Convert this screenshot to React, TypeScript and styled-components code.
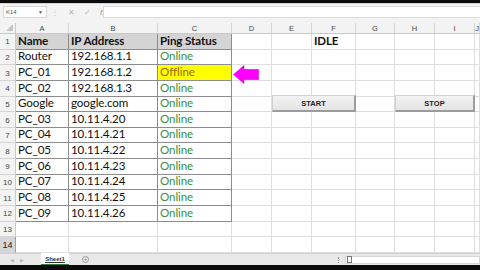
import React from 'react';
import styled, { createGlobalStyle } from 'styled-components';

const GlobalStyle = createGlobalStyle`
  html, body { margin: 0; padding: 0; background: #000; overflow: hidden; }
  * { box-sizing: border-box; }
`;

const cols = ['A', 'B', 'C', 'D', 'E', 'F', 'G', 'H', 'I', 'J'];
const rows = [
  { name: 'Router', ip: '192.168.1.1', status: 'Online' },
  { name: 'PC_01', ip: '192.168.1.2', status: 'Offline' },
  { name: 'PC_02', ip: '192.168.1.3', status: 'Online' },
  { name: 'Google', ip: 'google.com', status: 'Online' },
  { name: 'PC_03', ip: '10.11.4.20', status: 'Online' },
  { name: 'PC_04', ip: '10.11.4.21', status: 'Online' },
  { name: 'PC_05', ip: '10.11.4.22', status: 'Online' },
  { name: 'PC_06', ip: '10.11.4.23', status: 'Online' },
  { name: 'PC_07', ip: '10.11.4.24', status: 'Online' },
  { name: 'PC_08', ip: '10.11.4.25', status: 'Online' },
  { name: 'PC_09', ip: '10.11.4.26', status: 'Online' },
];

const Window = styled.div`
  width: 480px;
  height: 270px;
  display: flex;
  flex-direction: column;
  background: #fff;
  font-family: Lato, 'Liberation Sans', Arial, sans-serif;
`;

const BlackBar = styled.div<{ h: number }>`
  height: ${p => p.h}px;
  background: #0b0b0b;
  flex: none;
`;

const FormulaBar = styled.div`
  height: 20px;
  flex: none;
  background: #f3f3f3;
  border-top: 1px solid #cfd8cf;
  display: flex;
  align-items: flex-start;
  padding: 2px 0 0 3px;
`;

const NameBox = styled.div`
  width: 44px;
  height: 12px;
  background: #fff;
  border: 1px solid #d8d8d8;
  display: flex;
  align-items: center;
  justify-content: space-between;
  padding: 0 3px 0 2px;
  font-size: 6px;
  color: #555;
  font-family: 'Liberation Sans', Arial, sans-serif;
`;

const FxIcons = styled.div`
  width: 56px;
  height: 12px;
  display: flex;
  align-items: center;
  padding-left: 4px;
  gap: 9px;
  font-size: 8px;
  color: #b5b5b5;
  font-family: 'Liberation Sans', Arial, sans-serif;
`;

const FormulaInput = styled.div`
  flex: 1;
  height: 12px;
  background: #fff;
  border: 1px solid #dcdcdc;
  border-right: none;
`;

const SheetArea = styled.div`
  position: relative;
  flex: 1;
  background: #fff;
  overflow: hidden;
`;

const Grid = styled.div`
  display: grid;
  grid-template-columns: 16px 53px 89px 74px 40px 40px 44px 39px 40px 40px 1fr;
  grid-template-rows: 11px repeat(14, 15.65px);
  height: 100%;
`;

const Corner = styled.div`
  background: #f3f3f3;
  border-right: 1px solid #c9c9c9;
  border-bottom: 1px solid #c9c9c9;
  position: relative;
  &::after {
    content: '';
    position: absolute;
    right: 2px;
    bottom: 2px;
    border-left: 7px solid transparent;
    border-bottom: 7px solid #c6c6c6;
  }
`;

const ColHead = styled.div`
  background: #f3f3f3;
  border-right: 1px solid #d4d4d4;
  border-bottom: 1px solid #c9c9c9;
  font-family: 'Liberation Sans', Arial, sans-serif;
  font-size: 7.5px;
  color: #444;
  display: flex;
  align-items: center;
  justify-content: center;
`;

const RowHead = styled.div<{ $active?: boolean }>`
  background: ${p => (p.$active ? '#d6d6d6' : '#f3f3f3')};
  border-right: 1px solid ${p => (p.$active ? '#a0a0a0' : '#c9c9c9')};
  border-bottom: 1px solid #d4d4d4;
  font-family: 'Liberation Sans', Arial, sans-serif;
  font-size: ${p => (p.$active ? '9px' : '8px')};
  color: ${p => (p.$active ? '#222' : '#444')};
  display: flex;
  align-items: center;
  justify-content: center;
  padding-top: 1px;
`;

type Tone = 'plain' | 'head' | 'online' | 'offline';

const toneColor: Record<Tone, string> = {
  plain: '#111',
  head: '#111',
  online: '#3a8f3a',
  offline: '#9c6500',
};

const Cell = styled.div<{ $tone?: Tone; $boxed?: boolean; $bold?: boolean }>`
  border-right: 1px solid ${p => (p.$boxed ? '#8c8c8c' : '#dedede')};
  border-bottom: 1px solid ${p => (p.$boxed ? '#8c8c8c' : '#dedede')};
  background: ${p =>
    p.$tone === 'head' ? '#d4d4d4' : p.$tone === 'offline' ? '#ffff00' : '#fff'};
  color: ${p => toneColor[p.$tone || 'plain']};
  font-size: 11.6px;
  letter-spacing: -0.1px;
  font-weight: ${p => (p.$bold || p.$tone === 'head' ? 700 : 400)};
  display: flex;
  align-items: flex-end;
  padding: 0 0 1px 2px;
  white-space: nowrap;
  line-height: 14px;
`;

const Button = styled.div<{ $left: number; $width: number }>`
  position: absolute;
  top: 72px;
  left: ${p => p.$left}px;
  width: ${p => p.$width}px;
  height: 17px;
  background: linear-gradient(#f2f2f2, #e4e4e4);
  border: 1px solid #d0d0d0;
  border-right: 2px solid #9c9c9c;
  border-bottom: 2px solid #9c9c9c;
  display: flex;
  align-items: center;
  justify-content: center;
  font-family: 'Liberation Sans', Arial, sans-serif;
  font-size: 7.5px;
  font-weight: 700;
  color: #222;
`;

const Arrow = styled.svg`
  position: absolute;
  left: 233px;
  top: 42px;
`;

const TabBar = styled.div`
  height: 12px;
  flex: none;
  background: #e9e9e9;
  border-top: 1px solid #cfcfcf;
  display: flex;
  align-items: stretch;
  font-family: 'Liberation Sans', Arial, sans-serif;
`;

const NavArrows = styled.div`
  width: 41px;
  display: flex;
  align-items: center;
  gap: 6px;
  padding-left: 10px;
  font-size: 5px;
  color: #b8b8b8;
`;

const SheetTab = styled.div`
  width: 28px;
  background: #fff;
  border-bottom: 1px solid #2b7a3e;
  margin-top: -1px;
  display: flex;
  align-items: center;
  justify-content: center;
  font-size: 6px;
  font-weight: 700;
  color: #333;
  text-decoration: underline;
`;

const AddSheet = styled.div`
  width: 7px;
  height: 7px;
  margin: 2px 0 0 13px;
  border: 1px solid #9a9a9a;
  border-radius: 50%;
  font-size: 6px;
  line-height: 5px;
  text-align: center;
  color: #777;
`;

const ScrollArea = styled.div`
  margin-left: auto;
  width: 144px;
  display: flex;
  align-items: center;
  gap: 6px;
  padding-left: 2px;
`;

const Dots = styled.span`
  width: 1px;
  height: 6px;
  border-left: 1px dotted #999;
`;

const ScrollTrack = styled.div`
  flex: 1;
  height: 8px;
  background: #fff;
  border: 1px solid #d6d6d6;
  display: flex;
  align-items: center;
  padding-left: 1px;
  &::before {
    content: '';
    width: 3px;
    height: 5px;
    background: #fff;
    border: 1px solid #777;
  }
`;

const statusTone = (s: string): Tone => (s === 'Online' ? 'online' : 'offline');

const App: React.FunctionComponent = () => {
  const blank = (n: number, key: string) =>
    Array.from({ length: n }).map((_, i) => <Cell key={key + i} />);

  return (
    <>
      <GlobalStyle />
      <Window>
        <BlackBar h={3} />
        <FormulaBar>
          <NameBox>
            <span>K14</span>
            <span style={{ fontSize: 5 }}>▼</span>
          </NameBox>
          <FxIcons>
            <span style={{ color: '#ccc' }}>⋮</span>
            <span>✕</span>
            <span>✓</span>
            <span style={{ fontStyle: 'italic', color: '#999' }}>fx</span>
          </FxIcons>
          <FormulaInput />
        </FormulaBar>

        <SheetArea>
          <Grid>
            <Corner />
            {cols.map(c => (
              <ColHead key={c}>{c}</ColHead>
            ))}

            <RowHead>1</RowHead>
            <Cell $tone="head" $boxed>Name</Cell>
            <Cell $tone="head" $boxed>IP Address</Cell>
            <Cell $tone="head" $boxed>Ping Status</Cell>
            {blank(2, 'r1a')}
            <Cell $bold style={{ fontSize: 11.5 }}>IDLE</Cell>
            {blank(4, 'r1b')}

            {rows.map((r, i) => (
              <React.Fragment key={r.name}>
                <RowHead>{i + 2}</RowHead>
                <Cell $boxed>{r.name}</Cell>
                <Cell $boxed>{r.ip}</Cell>
                <Cell $boxed $tone={statusTone(r.status)}>{r.status}</Cell>
                {blank(7, 'r' + i)}
              </React.Fragment>
            ))}

            <RowHead>13</RowHead>
            {blank(10, 'r13')}
            <RowHead $active>14</RowHead>
            {blank(10, 'r14')}
          </Grid>

          <Arrow width="26" height="19" viewBox="0 0 26 19">
            <polygon
              points="0.5,9.5 11,0.5 11,4.5 25.5,4.5 25.5,14.5 11,14.5 11,18.5"
              fill="#ff00ff"
              stroke="#d000d0"
              strokeWidth="0.6"
            />
          </Arrow>
          <Button $left={272} $width={84}>START</Button>
          <Button $left={395} $width={80}>STOP</Button>
        </SheetArea>

        <TabBar>
          <NavArrows>
            <span>◀</span>
            <span>▶</span>
          </NavArrows>
          <SheetTab>Sheet1</SheetTab>
          <AddSheet>+</AddSheet>
          <ScrollArea>
            <Dots />
            <ScrollTrack />
          </ScrollArea>
        </TabBar>
        <BlackBar h={5} />
      </Window>
    </>
  );
};

export default App;
